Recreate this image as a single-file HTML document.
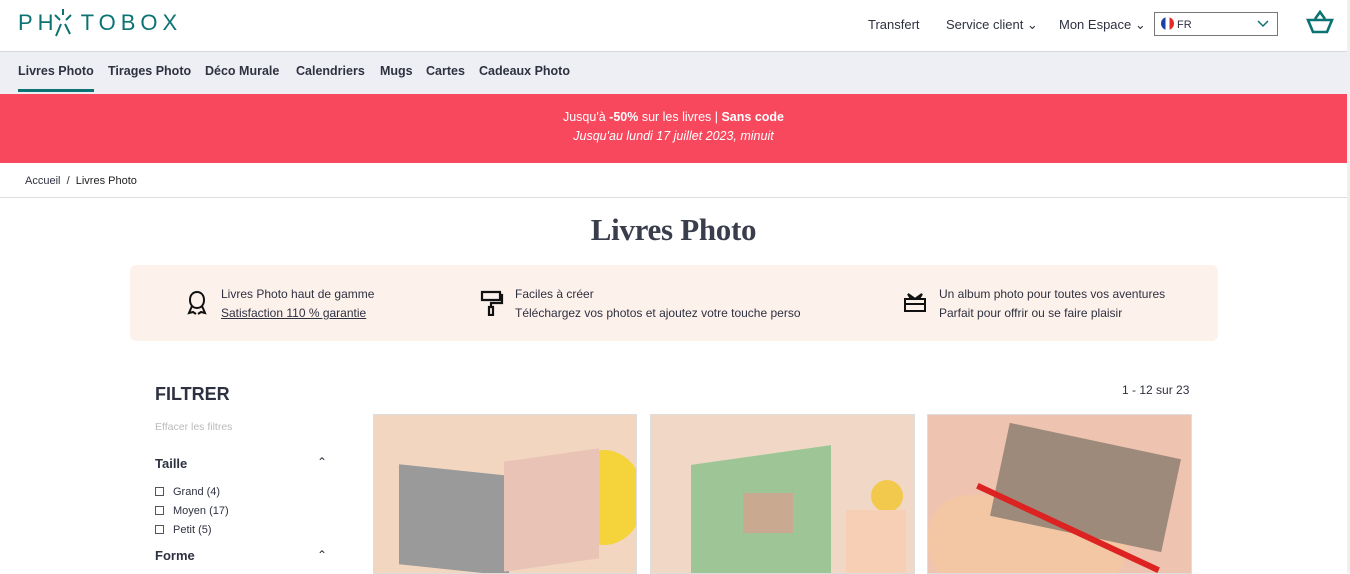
<!DOCTYPE html>
<html><head><meta charset="utf-8"><style>
*{margin:0;padding:0;box-sizing:border-box}
body{width:1350px;height:573px;overflow:hidden;background:#fff;font-family:"Liberation Sans",sans-serif;color:#2e3140;position:relative}
.a{position:absolute}
.hdr{top:0;left:0;width:1347px;height:52px;border-bottom:1px solid #d8d8dc}
.nav{top:52px;left:0;width:1347px;height:42px;background:#eeeff4}
.nav span{position:absolute;top:12px;font-size:12.5px;font-weight:bold;color:#2e3140}
.promo{top:94px;left:0;width:1347px;height:69px;background:#f7485d;color:#fff;text-align:center;font-size:12.5px}
.sb{position:absolute;right:0;top:0;width:3px;height:573px;background:#f0f0f0}
.cb{display:inline-block;width:9px;height:9px;border:1px solid #555;margin-right:9px;vertical-align:-1px}
</style></head><body>
<div class="a hdr">
 <div class="a" style="left:18px;top:10px;font-size:22px;letter-spacing:5px;color:#0c7373">PH<span style="display:inline-block;width:22px"></span>TOBOX</div>
 <svg class="a" style="left:52px;top:7px" width="22" height="32" viewBox="0 0 22 32" stroke="#0c7373" stroke-width="2" fill="none"><path d="M11 2v6M3 8l5 5M19 8l-5 5M9 17l-5 12M13 17l5 10"/></svg>
 <div class="a" style="left:868px;top:17px;font-size:13px">Transfert</div>
 <div class="a" style="left:946px;top:17px;font-size:13px">Service client ⌄</div>
 <div class="a" style="left:1059px;top:17px;font-size:13px">Mon Espace ⌄</div>
 <div class="a" style="left:1154px;top:12px;width:124px;height:24px;border:1px solid #777;font-size:11px;padding:4px 6px">
  <span style="display:inline-block;width:13px;height:13px;border-radius:50%;background:linear-gradient(90deg,#1d3fa8 33%,#fff 33% 66%,#e32b2b 66%);vertical-align:-2px"></span> FR
  <svg class="a" style="right:8px;top:7px" width="12" height="8"><path d="M1 1l5 5 5-5" stroke="#0c7373" stroke-width="1.5" fill="none"/></svg></div>
 <svg class="a" style="left:1306px;top:10px" width="28" height="24" viewBox="0 0 28 24" fill="none" stroke="#0c7373" stroke-width="2.6"><path d="M9 9l5-7 5 7M2 10h24l-5 12H7z"/></svg>
</div>
<div class="a nav">
 <span style="left:18px">Livres Photo</span><span style="left:108px">Tirages Photo</span><span style="left:205px">Déco Murale</span><span style="left:296px">Calendriers</span><span style="left:380px">Mugs</span><span style="left:426px">Cartes</span><span style="left:479px">Cadeaux Photo</span>
 <div class="a" style="left:18px;top:37px;width:76px;height:3px;background:#0c7373"></div>
</div>
<div class="a promo"><div style="margin-top:16px">Jusqu'à <b>-50%</b> sur les livres | <b>Sans code</b></div><div style="margin-top:5px;font-style:italic">Jusqu'au lundi 17 juillet 2023, minuit</div></div>
<div class="a" style="left:25px;top:175px;font-size:11px">Accueil &nbsp;/&nbsp; <b style="font-weight:normal;color:#222">Livres Photo</b></div>
<div class="a" style="left:0;top:197px;width:1347px;height:1px;background:#ddd"></div>
<div class="a" style="left:0;width:1347px;top:212px;text-align:center;font-family:'Liberation Serif',serif;font-size:31px;font-weight:bold;color:#3a3d4c;letter-spacing:-0.3px">Livres Photo</div>
<div class="a" style="left:130px;top:265px;width:1088px;height:76px;background:#fdf1ec;border-radius:6px;font-size:12px">
 <svg class="a" style="left:57px;top:25px" width="20" height="26" viewBox="0 0 20 26" fill="none" stroke="#111" stroke-width="2"><path d="M10 2c4 0 7 3 7 8s-3 8-7 8-7-3-7-8 3-8 7-8zM5 16l-3 7 4-1 3 2M15 16l3 7-4-1-3 2"/></svg>
 <div class="a" style="left:91px;top:22px">Livres Photo haut de gamme</div>
 <div class="a" style="left:91px;top:41px;text-decoration:underline">Satisfaction 110 % garantie</div>
 <svg class="a" style="left:350px;top:25px" width="24" height="26" viewBox="0 0 24 26" fill="none" stroke="#111" stroke-width="2.2"><path d="M2 2h18v8H2zM20 5h2v8H11v4M9 17h4v8H9z"/></svg>
 <div class="a" style="left:385px;top:22px">Faciles à créer</div>
 <div class="a" style="left:385px;top:41px">Téléchargez vos photos et ajoutez votre touche perso</div>
 <svg class="a" style="left:773px;top:26px" width="24" height="22" viewBox="0 0 24 22" fill="none" stroke="#111" stroke-width="2"><path d="M2 8h20v12H2zM2 13h20M8 8l-3-5 7 5 7-5-3 5"/></svg>
 <div class="a" style="left:809px;top:22px">Un album photo pour toutes vos aventures</div>
 <div class="a" style="left:809px;top:41px">Parfait pour offrir ou se faire plaisir</div>
</div>
<div class="a" style="left:155px;top:384px;font-size:18px;font-weight:bold">FILTRER</div>
<div class="a" style="left:155px;top:421px;font-size:10.5px;color:#bbb">Effacer les filtres</div>
<div class="a" style="left:155px;top:456px;font-size:13px;font-weight:bold">Taille</div>
<div class="a" style="left:317px;top:455px;font-size:12px">⌃</div>
<div class="a" style="left:155px;top:483px;font-size:11px;line-height:19px"><div><span class="cb"></span>Grand (4)</div><div><span class="cb"></span>Moyen (17)</div><div><span class="cb"></span>Petit (5)</div></div>
<div class="a" style="left:155px;top:548px;font-size:13px;font-weight:bold">Forme</div>
<div class="a" style="left:317px;top:548px;font-size:12px">⌃</div>
<div class="a" style="left:1122px;top:383px;font-size:12px">1 - 12 sur 23</div>
<div class="a" style="left:373px;top:414px;width:264px;height:160px;background:#f2d6c0;border:1px solid #ddd;overflow:hidden">
 <div class="a" style="left:190px;top:35px;width:80px;height:95px;border-radius:50%;background:#f5d33b"></div>
 <div class="a" style="left:25px;top:55px;width:110px;height:100px;background:#9a9a9a;transform:skewY(6deg)"></div>
 <div class="a" style="left:130px;top:40px;width:95px;height:110px;background:#e9c3b5;transform:skewY(-8deg)"></div>
</div>
<div class="a" style="left:650px;top:414px;width:265px;height:160px;background:#f1d8c6;border:1px solid #ddd;overflow:hidden">
 <div class="a" style="left:40px;top:40px;width:140px;height:130px;background:#9dc596;transform:skewY(-8deg)"></div>
 <div class="a" style="left:92px;top:78px;width:50px;height:40px;background:#c9a98f"></div>
 <div class="a" style="left:220px;top:65px;width:32px;height:32px;border-radius:50%;background:#f2c94c"></div>
 <div class="a" style="left:195px;top:95px;width:60px;height:70px;background:#f7cfb4"></div>
</div>
<div class="a" style="left:927px;top:414px;width:265px;height:160px;background:#eec3b0;border:1px solid #ddd;overflow:hidden">
 <div class="a" style="left:0;top:80px;width:200px;height:90px;background:#f3c7a4;border-radius:40px"></div>
 <div class="a" style="left:70px;top:25px;width:175px;height:95px;background:#9d8a7a;transform:rotate(12deg)"></div>
 <div class="a" style="left:40px;top:110px;width:200px;height:6px;background:#d22;transform:rotate(25deg)"></div>
</div>
<div class="sb"></div>
</body></html>
